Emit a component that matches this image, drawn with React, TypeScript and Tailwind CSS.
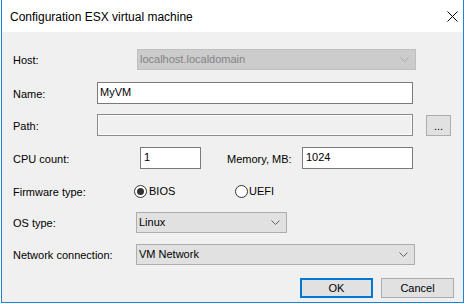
import React from "react";

const Chevron = ({ color = "#606060" }: { color?: string }) => (
  <svg width="9" height="5" viewBox="0 0 9 5" className="shrink-0">
    <polyline points="0.5,0.5 4.5,4.5 8.5,0.5" fill="none" stroke={color} strokeWidth="1" />
  </svg>
);

const Label = ({ w, children }: { w: string; children: React.ReactNode }) => (
  <div className={`${w} shrink-0 pt-[2px] leading-[13px]`}>{children}</div>
);

const Radio = ({ checked }: { checked?: boolean }) => (
  <div className="w-[13px] h-[13px] rounded-full border border-[#333333] bg-white flex items-center justify-center shrink-0">
    {checked && <div className="w-[7px] h-[7px] rounded-full bg-[#333333]" />}
  </div>
);

export default function App() {
  return (
    <div
      className="w-[466px] h-[304px] bg-white text-[11px] text-black"
      style={{ fontFamily: '"Liberation Sans", Arial, sans-serif' }}
    >
      <div className="ml-[1px] w-[463px] h-[303px] border-x border-b border-[#1883d7] flex flex-col">
        {/* Title bar */}
        <div className="h-[32px] shrink-0 bg-white flex items-center justify-between pl-[8px]">
          <div className="text-[12px] leading-[14px] pt-[2px]">Configuration ESX virtual machine</div>
          <svg width="11" height="11" viewBox="0 0 11 11" className="mr-[5px] mt-[1px]">
            <line x1="0.5" y1="0.5" x2="10.5" y2="10.5" stroke="#000" strokeWidth="1" />
            <line x1="10.5" y1="0.5" x2="0.5" y2="10.5" stroke="#000" strokeWidth="1" />
          </svg>
        </div>

        {/* Body */}
        <div className="flex-1 bg-[#f0f0f0] pt-[17px] pl-[11px] flex flex-col">
          {/* Host */}
          <div className="flex items-center h-[21px]">
            <Label w="w-[124px]">Host:</Label>
            <div className="w-[279px] h-[21px] border border-[#bfbfbf] bg-[#cccccc] flex items-center justify-between pl-[2px] pr-[6px] text-[#838383]">
              <span className="leading-[13px]">localhost.localdomain</span>
              <Chevron color="#a8a8a8" />
            </div>
          </div>

          {/* Name */}
          <div className="flex items-center h-[22px] mt-[12px]">
            <Label w="w-[84px]">Name:</Label>
            <div className="w-[316px] h-[22px] border border-[#7a7a7a] bg-white pl-[2px] pt-[3px] leading-[13px]">
              MyVM
            </div>
          </div>

          {/* Path */}
          <div className="flex items-center h-[22px] mt-[10px]">
            <Label w="w-[84px]">Path:</Label>
            <div className="w-[316px] h-[22px] border border-[#8a8a8a] bg-[#f0f0f0] shadow-[inset_0_0_0_1px_#fbfbfb]" />
            <div className="ml-[13px] mt-[1px] w-[25px] h-[21px] border border-[#adadad] bg-[#e1e1e1] flex items-end justify-center pb-[4px] leading-[10px]">
              ...
            </div>
          </div>

          {/* CPU / Memory */}
          <div className="flex items-center h-[22px] mt-[11px]">
            <Label w="w-[127px]">CPU count:</Label>
            <div className="w-[61px] h-[22px] border border-[#7a7a7a] bg-white pl-[3px] pt-[3px] leading-[13px]">
              1
            </div>
            <div className="ml-[26px]">
              <Label w="w-[75px]">Memory, MB:</Label>
            </div>
            <div className="w-[111px] h-[22px] border border-[#7a7a7a] bg-white pl-[3px] pt-[3px] leading-[13px]">
              1024
            </div>
          </div>

          {/* Firmware */}
          <div className="flex items-center h-[20px] mt-[12px]">
            <Label w="w-[121px]">Firmware type:</Label>
            <div className="w-[101px] flex items-center gap-[2px] shrink-0">
              <Radio checked />
              <span className="leading-[13px] pt-[1px]">BIOS</span>
            </div>
            <div className="flex items-center gap-[1px]">
              <Radio />
              <span className="leading-[13px] pt-[1px]">UEFI</span>
            </div>
          </div>

          {/* OS type */}
          <div className="flex items-center h-[21px] mt-[11px]">
            <Label w="w-[123px]">OS type:</Label>
            <div className="w-[151px] h-[21px] border border-[#adadad] bg-[#e1e1e1] flex items-center justify-between pl-[2px] pr-[6px]">
              <span className="leading-[13px]">Linux</span>
              <Chevron />
            </div>
          </div>

          {/* Network */}
          <div className="flex items-center h-[21px] mt-[11px]">
            <Label w="w-[123px]">Network connection:</Label>
            <div className="w-[279px] h-[21px] border border-[#adadad] bg-[#e1e1e1] flex items-center justify-between pl-[2px] pr-[6px]">
              <span className="leading-[13px]">VM Network</span>
              <Chevron />
            </div>
          </div>

          {/* Buttons */}
          <div className="flex justify-end gap-[8px] mr-[9px] mt-[13px]">
            <div className="w-[73px] h-[20px] border-2 border-[#0078d7] bg-[#e1e1e1] flex items-center justify-center leading-[13px]">
              OK
            </div>
            <div className="w-[73px] h-[20px] border border-[#adadad] bg-[#e1e1e1] flex items-center justify-center leading-[13px]">
              Cancel
            </div>
          </div>
        </div>
      </div>
    </div>
  );
}
